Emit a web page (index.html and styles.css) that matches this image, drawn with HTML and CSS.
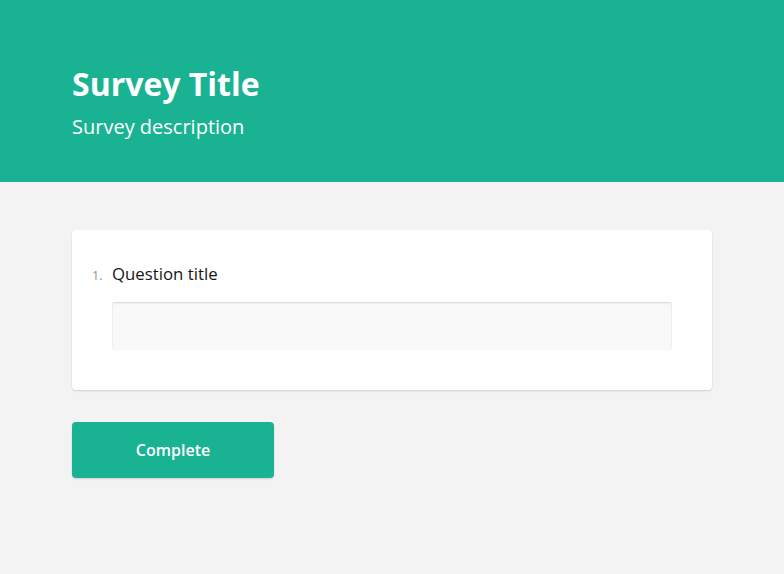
FILE: index.html
```html
<!DOCTYPE html>
<html>
<head>
<meta charset="utf-8">
<link rel="stylesheet" href="styles.css">
</head>
<body>
<header class="header">
  <h1 class="title">Survey Title</h1>
  <div class="description">Survey description</div>
</header>
<main class="body">
  <section class="card">
    <div class="q-title"><span class="q-num">1.</span><span class="q-text">Question title</span></div>
    <div class="q-input"></div>
  </section>
  <button class="complete">Complete</button>
</main>
</body>
</html>
```
FILE: styles.css
```css
html, body { margin: 0; padding: 0; }
body {
  font-family: "Open Sans", "Liberation Sans", sans-serif;
  background: #f3f3f3;
  width: 784px;
  height: 574px;
  overflow: hidden;
}
.header {
  background: #19b394;
  height: 182px;
  box-sizing: border-box;
  padding: 64px 72px 0;
  color: #fff;
}
.title {
  margin: 0;
  font-size: 32px;
  line-height: 40px;
  font-weight: 700;
}
.description {
  margin-top: 9px;
  font-size: 20px;
  line-height: 28px;
}
.body {
  padding: 48px 72px;
  display: flex;
  flex-direction: column;
  align-items: flex-start;
}
.card {
  align-self: stretch;
  background: #fff;
  border-radius: 4px;
  box-shadow: 0 1px 2px rgba(0,0,0,0.15);
  padding: 32px 40px 40px;
}
.q-title {
  display: flex;
  align-items: baseline;
  height: 24px;
  margin-left: -20px;
  font-size: 16.8px;
  line-height: 24px;
  color: #161616;
}
.q-num {
  width: 20px;
  flex: none;
  font-size: 12.5px;
  line-height: 16px;
  color: #909090;
}
.q-input {
  margin-top: 16px;
  height: 48px;
  background: #f9f9f9;
  border-radius: 3px;
  box-shadow: inset 0 1px 2px rgba(0,0,0,0.15);
}
.complete {
  margin-top: 32px;
  width: 202px;
  height: 56px;
  border: 0;
  border-radius: 4px;
  background: #19b394;
  color: #fff;
  font-family: inherit;
  font-size: 16px;
  font-weight: 600;
  box-shadow: 0 1px 2px rgba(0,0,0,0.15);
}
```
